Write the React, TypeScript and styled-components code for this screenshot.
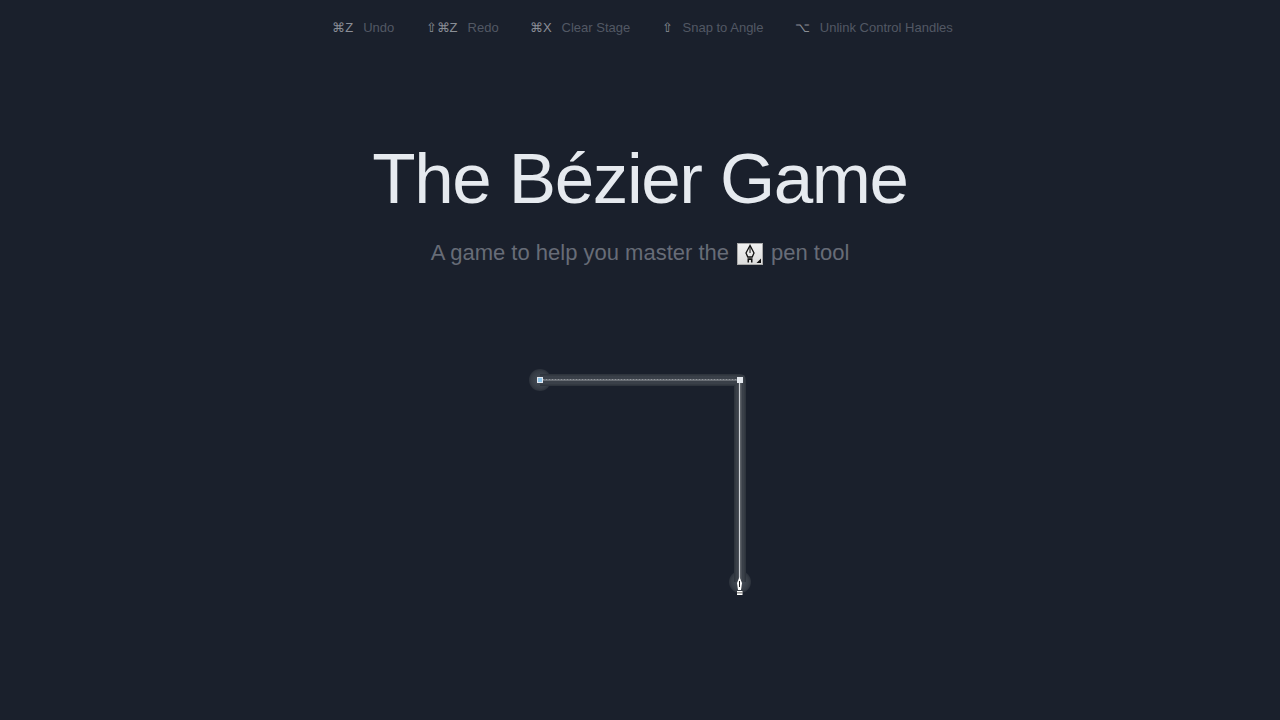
import React from "react";
import styled, { createGlobalStyle } from "styled-components";

const Global = createGlobalStyle`
  html, body { margin: 0; padding: 0; height: 100%; background: #1a202c; overflow: hidden; }
  body { font-family: "Liberation Sans", Arial, sans-serif; }
`;

const Page = styled.div`
  width: 1280px;
  height: 720px;
  display: flex;
  flex-direction: column;
  align-items: center;
  background: #1a202c;
`;

const Shortcuts = styled.ul`
  display: flex;
  gap: 31.3px;
  margin: 0;
  padding: 20px 0 0 5px;
  list-style: none;
  height: 15px;
  font-size: 13px;
  line-height: 15px;
`;

const Shortcut = styled.li`
  display: flex;
  gap: 10px;
  white-space: nowrap;
`;

const Keys = styled.span`
  color: #8a8e96;
`;

const Label = styled.span`
  color: #525864;
`;

const Title = styled.h1`
  margin: 101px 0 0;
  font-size: 71px;
  line-height: 86px;
  font-weight: 400;
  letter-spacing: -1.4px;
  color: #e6eaef;
`;

const Subtitle = styled.p`
  display: flex;
  align-items: center;
  gap: 8px;
  margin: 18px 0 0;
  font-size: 22px;
  line-height: 26px;
  color: #676c77;
`;

const PenBadge = styled.svg`
  width: 26px;
  height: 22px;
  display: block;
  margin-top: 2px;
`;

const Stage = styled.svg`
  display: block;
  width: 300px;
  height: 270px;
  margin-top: 64px;
`;

const items = [
  ["⌘Z", "Undo"],
  ["⇧⌘Z", "Redo"],
  ["⌘X", "Clear Stage"],
  ["⇧", "Snap to Angle"],
  ["⌥", "Unlink Control Handles"],
];

export default function App() {
  return (
    <Page>
      <Global />
      <Shortcuts>
        {items.map(([k, l]) => (
          <Shortcut key={l}>
            <Keys>{k}</Keys>
            <Label>{l}</Label>
          </Shortcut>
        ))}
      </Shortcuts>
      <Title>The Bézier Game</Title>
      <Subtitle>
        <span>A game to help you master the</span>
        <PenBadge viewBox="0 0 26 22">
          <defs>
            <linearGradient id="badge" x1="0" y1="0" x2="0" y2="1">
              <stop offset="0" stopColor="#f2f2f2" />
              <stop offset="1" stopColor="#dcdcdc" />
            </linearGradient>
          </defs>
          <rect x="0.5" y="0.5" width="25" height="21" fill="url(#badge)" stroke="#a9a9a9" />
          <path d="M13 2.5 L9 10 L10.8 14 H15.2 L17 10 Z" fill="none" stroke="#111" strokeWidth="1.3" />
          <path d="M13 3.5 V10" stroke="#111" strokeWidth="1" />
          <path d="M10.5 15.2 H15.5 V19.5 H14 V17 H12 V19.5 H10.5 Z" fill="#111" />
          <path d="M24 15.5 V20 H19.5 Z" fill="#111" />
        </PenBadge>
        <span>pen tool</span>
      </Subtitle>
      <Stage viewBox="0 0 300 270">
        <defs>
          <radialGradient id="node">
            <stop offset="0" stopColor="#48505a" />
            <stop offset="0.8" stopColor="#353b44" />
            <stop offset="1" stopColor="#2b313b" />
          </radialGradient>
        </defs>
        <circle cx="50" cy="50" r="11" fill="url(#node)" />
        <circle cx="250" cy="252" r="11" fill="url(#node)" />
        <path d="M50 50 H250 V252" fill="none" stroke="#2e343d" strokeWidth="12" strokeLinejoin="round" />
        <path d="M50 50 H250 V252" fill="none" stroke="#3a4049" strokeWidth="9" />
        <path d="M50 50 H250" stroke="#686d74" strokeWidth="2" fill="none" />
        <path d="M50 49.5 H250" stroke="#8f9399" strokeWidth="1" strokeDasharray="1 2" fill="none" />
        <path d="M250 50 V250" stroke="#5a5f66" strokeWidth="3" fill="none" />
        <path d="M249.5 50 V248" stroke="#cdd1d6" strokeWidth="1" fill="none" />
        <rect x="47.5" y="47.5" width="5" height="5" fill="#8fc4e8" stroke="#e2e8f0" />
        <rect x="247" y="47" width="6" height="6" fill="#e4e8ee" />
        <path d="M249.5 247 L247 253 L248 260 H251 L252 253 Z" fill="#fff" />
        <path d="M249.5 251 V257" stroke="#222" strokeWidth="1" />
        <rect x="247" y="261" width="5.5" height="4" fill="#fff" />
        <rect x="247" y="262.5" width="5.5" height="0.8" fill="#333" />
      </Stage>
    </Page>
  );
}
